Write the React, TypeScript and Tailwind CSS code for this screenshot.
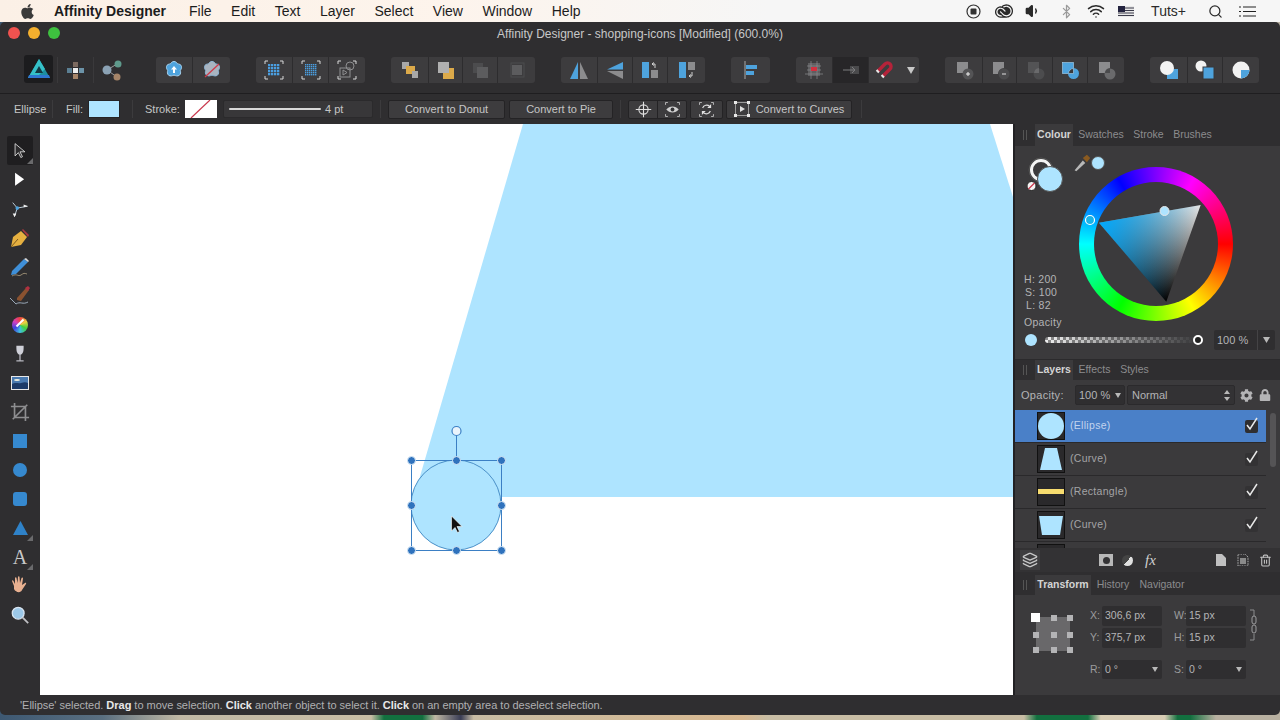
import type { ReactNode } from 'react'
import { FaApple, FaCog, FaLock } from 'react-icons/fa'
import { SiAdobecreativecloud } from 'react-icons/si'
import { Bluetooth, Layers, Search, Trash2, Volume1, Wifi } from 'lucide-react'

const BLUE = '#4ea3dd'
const GREY = '#8c8c8e'
const DIM = '#5c5c5e'
const GOLD = '#dcaa4a'

const Ico = ({ children, size = 22 }: { children: ReactNode; size?: number }) => (
  <svg width={size} height={size} viewBox="0 0 22 22" className="block">
    {children}
  </svg>
)

const Group = ({ children }: { children: ReactNode }) => (
  <div className="flex h-[26px] overflow-hidden rounded-[3px] bg-[#3d3c3e]">{children}</div>
)

const Btn = ({ w, children, dark }: { w: string; children: ReactNode; dark?: boolean }) => (
  <div className={`flex items-center justify-center border-r border-[#2d2c2e] last:border-r-0 ${w} ${dark ? 'bg-[#272628]' : ''}`}>
    {children}
  </div>
)

const Corners = () => (
  <path d="M2 5V2h3M17 2h3v3M2 17v3h3M17 20h3v-3" fill="none" stroke="#d8d8d8" strokeWidth="1" />
)

const Flower = ({ fill, edge }: { fill: string; edge: string }) => (
  <g fill={fill} stroke={edge} strokeWidth="1">
    <path d="M11 2.5c2 0 3 1.5 3.6 2.4 1.2.1 3.6.5 3.9 2.6.3 1.7-.6 3.1-1.2 3.9.4 1.3.7 3.6-1 4.9-1.6 1.1-3.6.5-5.300-.2-1.700.7-3.700 1.300-5.300.2-1.700-1.300-1.400-3.600-1-4.900-.6-.8-1.500-2.200-1.200-3.900.3-2.100 2.700-2.500 3.900-2.600C8 4 9 2.500 11 2.500z" />
  </g>
)

const DotGrid = ({ n, d, color }: { n: number; d: number; color: string }) => {
  const step = 12 / n
  const cells = Array.from({ length: n * n }, (_, i) => i)
  return (
    <g fill={color}>
      {cells.map((i) => (
        <rect key={i} x={5 + (i % n) * step} y={5 + Math.floor(i / n) * step} width={d} height={d} />
      ))}
    </g>
  )
}

const Toolbar = () => (
  <div className="flex h-[48px] shrink-0 items-start pt-3">
    <div className="ml-6 flex h-[28px] w-[29px] items-center justify-center rounded-[3px] bg-[#1c1c1e] -mt-[2px]">
      <svg width="24" height="22" viewBox="0 0 24 22">
        <path d="M12 1 23 20H1z" fill="#1d8fa0" />
        <path d="M12 1 18 11 9 20H1z" fill="#35c1c8" />
        <path d="M12 8 16 15H8z" fill="#143842" />
        <path d="M2 17h20l1 3H1z" fill="#2f78d0" />
      </svg>
    </div>
    <div className="ml-1 h-[26px] w-px bg-[#3a393b]" />
    <div className="flex h-[26px] w-[35px] items-center justify-center">
      <Ico>
        <rect x="8" y="3" width="5" height="5" fill="#7c6a60" />
        <rect x="2" y="9" width="5" height="5" fill="#5b7f93" />
        <rect x="8" y="9" width="5" height="5" fill="#eeeeee" />
        <rect x="14" y="9" width="5" height="5" fill="#6c93a8" />
        <rect x="8" y="15" width="5" height="5" fill="#a58468" />
      </Ico>
    </div>
    <div className="h-[26px] w-px bg-[#3a393b]" />
    <div className="flex h-[26px] w-[36px] items-center justify-center">
      <Ico>
        <path d="M6 11 16 5M6 11l10 7" stroke="#9a9a9a" strokeWidth="1" />
        <circle cx="6" cy="11" r="4.500" fill="#8ba2b4" />
        <circle cx="17" cy="5" r="3.500" fill="#5f9a8c" />
        <circle cx="16" cy="18" r="3.500" fill="#a58468" />
      </Ico>
    </div>
    <div className="ml-[26px] flex gap-[26px]">
      <Group>
        <Btn w="w-[37px]">
          <Ico>
            <Flower fill={BLUE} edge="#a8d4f2" />
            <path d="M11 7l3 3.500h-2V14h-2v-3.500H8z" fill="#ffffff" />
          </Ico>
        </Btn>
        <Btn w="w-[37px]">
          <Ico>
            <Flower fill="#a9b4c0" edge="#8fb8d8" />
            <path d="M4 18 18 5" stroke="#cf3a4a" strokeWidth="1.300" />
          </Ico>
        </Btn>
      </Group>
      <Group>
        <Btn w="w-[37px]">
          <Ico>
            <Corners />
            <DotGrid n={4} d={2.300} color="#4a9ee0" />
          </Ico>
        </Btn>
        <Btn w="w-[36px]">
          <Ico>
            <Corners />
            <DotGrid n={6} d={1.400} color="#4a9ee0" />
          </Ico>
        </Btn>
        <Btn w="w-[36px]">
          <Ico>
            <Corners />
            <g fill="none" stroke="#8f8f91" strokeWidth="1">
              <rect x="4" y="9" width="10" height="9" />
              <circle cx="14" cy="7" r="4" />
              <path d="M7 11v5l4-2.500z" />
            </g>
          </Ico>
        </Btn>
      </Group>
      <Group>
        <Btn w="w-[38px]">
          <Ico>
            <rect x="3" y="3" width="7" height="7" fill="#a8a8a8" />
            <rect x="7" y="7" width="9" height="8" fill={GOLD} />
            <rect x="13" y="12" width="6" height="7" fill="#a8a8a8" />
          </Ico>
        </Btn>
        <Btn w="w-[34px]">
          <Ico>
            <rect x="8" y="9" width="11" height="11" fill={GOLD} />
            <rect x="3" y="3" width="11" height="11" fill="#b0b0b0" />
          </Ico>
        </Btn>
        <Btn w="w-[35px]">
          <Ico>
            <rect x="4" y="4" width="10" height="10" fill="#4c4c4e" />
            <rect x="8" y="8" width="11" height="11" fill={DIM} />
          </Ico>
        </Btn>
        <Btn w="w-[37px]">
          <Ico>
            <rect x="5" y="4" width="13" height="14" fill="none" stroke="#4c4c4e" />
            <rect x="6" y="6" width="10" height="10" fill={DIM} />
          </Ico>
        </Btn>
      </Group>
      <Group>
        <Btn w="w-[37px]">
          <Ico>
            <path d="M10 3v17H2z" fill={BLUE} />
            <path d="M12 3v17h8z" fill={GREY} />
          </Ico>
        </Btn>
        <Btn w="w-[35px]">
          <Ico>
            <path d="M19 3v7.500H3z" fill={BLUE} />
            <path d="M19 20v-8H3z" fill={GREY} />
          </Ico>
        </Btn>
        <Btn w="w-[35px]">
          <Ico>
            <rect x="3" y="3" width="7" height="16" fill={BLUE} />
            <rect x="12" y="11" width="7" height="8" fill={GREY} />
            <path d="M13 5h3v4M13 5l2-1.500M13 5l2 1.500" fill="none" stroke="#e0e0e0" strokeWidth="0.900" />
          </Ico>
        </Btn>
        <Btn w="w-[37px]">
          <Ico>
            <rect x="3" y="3" width="7" height="16" fill={BLUE} />
            <rect x="12" y="3" width="7" height="8" fill={GREY} />
            <path d="M16 13v4h-3M13 17l2-1.500M13 17l2 1.500" fill="none" stroke="#e0e0e0" strokeWidth="0.900" />
          </Ico>
        </Btn>
      </Group>
      <Group>
        <Btn w="w-[39px]">
          <Ico>
            <path d="M5 2v18" stroke="#a8a8a8" strokeWidth="1" />
            <rect x="6" y="6" width="11" height="4" fill={BLUE} />
            <rect x="6" y="12" width="8" height="4" fill={BLUE} />
          </Ico>
        </Btn>
      </Group>
      <Group>
        <Btn w="w-[37px]">
          <Ico>
            <rect x="5" y="4" width="12" height="13" fill="#5f5f61" />
            <path d="M2 15h18M8 2v18M14 2v18M4 7h14M4 11h14" stroke="#8e8e90" strokeWidth="0.700" />
            <rect x="8" y="8" width="6" height="4" fill="#d2303f" />
          </Ico>
        </Btn>
        <Btn w="w-[36px]" dark>
          <Ico>
            <rect x="10" y="7" width="9" height="8" fill="#4a4a4c" />
            <path d="M3 11h12M12 8l3 3-3 3" fill="none" stroke="#7c7c7e" strokeWidth="1" />
          </Ico>
        </Btn>
        <div className="flex w-[50px] items-center pl-[5px]">
          <Ico>
            <path d="M4 12 11 5a3.500 3.500 0 0 1 5 5L9 17" fill="none" stroke="#b5233a" strokeWidth="3.400" />
            <path d="M3 13 4.500 11.500M8 18 9.500 16.500" fill="none" stroke="#e8e8e8" strokeWidth="3.400" />
          </Ico>
          <svg width="8" height="7" viewBox="0 0 8 7" className="ml-[11px]">
            <path d="M0 0h8L4 7z" fill="#c8c8c8" />
          </svg>
        </div>
      </Group>
      <Group>
        <Btn w="w-[38px]">
          <Ico>
            <rect x="4" y="3" width="11" height="11" fill={GREY} />
            <circle cx="15" cy="15" r="5.500" fill="#545456" />
            <path d="M13 15h4M15 13v4" stroke="#f0f0f0" strokeWidth="1" />
          </Ico>
        </Btn>
        <Btn w="w-[34px]">
          <Ico>
            <path d="M4 3h11v6a6 6 0 0 0-6 6H4z" fill={GREY} />
            <circle cx="15" cy="15" r="5.500" fill="#4b4b4d" />
            <path d="M13 15h4" stroke="#e0e0e0" strokeWidth="1" />
          </Ico>
        </Btn>
        <Btn w="w-[36px]">
          <Ico>
            <rect x="4" y="3" width="11" height="11" fill="#535355" />
            <circle cx="15" cy="15" r="5.500" fill="#4c4c4e" />
            <path d="M10 14a5.500 5.500 0 0 1 5-5v5z" fill="#6a6a6c" />
          </Ico>
        </Btn>
        <Btn w="w-[35px]">
          <Ico>
            <rect x="3.500" y="3.500" width="11" height="11" fill={BLUE} stroke="#a8d4f2" strokeWidth="0.600" />
            <circle cx="14.500" cy="14.500" r="5.500" fill={BLUE} />
            <path d="M9.500 14.500h5v-5a5 5 0 0 0-5 5z" fill="#39393b" stroke="#a8d4f2" strokeWidth="0.600" />
          </Ico>
        </Btn>
        <Btn w="w-[36px]">
          <Ico>
            <rect x="4" y="3" width="11" height="11" fill={GREY} />
            <circle cx="15" cy="15" r="5.500" fill="#6a6a6c" />
            <path d="M10 14a5.500 5.500 0 0 1 5-5v5z" fill="#4a4a4c" />
          </Ico>
        </Btn>
      </Group>
      <Group>
        <Btn w="w-[38px]">
          <Ico>
            <rect x="9" y="10" width="11" height="10" fill={BLUE} />
            <circle cx="9" cy="9" r="7" fill="#f2f2f2" />
          </Ico>
        </Btn>
        <Btn w="w-[35px]">
          <Ico>
            <circle cx="7" cy="7" r="5.500" fill="#f2f2f2" />
            <rect x="9" y="8" width="11" height="12" fill={BLUE} stroke="#39393b" strokeWidth="1" />
          </Ico>
        </Btn>
        <Btn w="w-[36px]">
          <Ico>
            <circle cx="11" cy="11" r="8.500" fill="#f2f2f2" />
            <path d="M11 11h8.500a8.500 8.500 0 0 1-8.500 8.500z" fill={BLUE} />
          </Ico>
        </Btn>
      </Group>
    </div>
  </div>
)

const CtxBtn = ({ w, children }: { w: string; children: ReactNode }) => (
  <div className={`flex h-[19px] items-center justify-center rounded-[2px] border border-[#242325] bg-[#3d3c3e] ${w}`}>
    {children}
  </div>
)

const ContextBar = () => (
  <div className="flex h-[31px] shrink-0 items-center border-t border-[#1f1e20] text-[11px] text-[#c6c6c6]">
    <div className="flex h-[18px] w-[53px] items-center border-r border-[#3c3b3d] pl-[14px]">Ellipse</div>
    <span className="ml-[13px] w-[22px]">Fill:</span>
    <div className="h-[18px] w-8 border border-[#242325] bg-[#aee4ff]" />
    <div className="ml-3 h-[18px] w-px bg-[#3c3b3d]" />
    <span className="ml-3 w-[40px]">Stroke:</span>
    <svg width="32" height="18" viewBox="0 0 32 18" className="block">
      <rect width="32" height="18" fill="#ffffff" />
      <path d="M6 18 25 0" stroke="#c9374c" strokeWidth="1.200" />
    </svg>
    <div className="ml-[6px] flex h-[18px] w-[150px] items-center rounded-[2px] border border-[#2b2a2c] bg-[#383739] pl-[5px]">
      <div className="h-[2px] w-[92px] rounded-full bg-[#d8d8d8]" />
      <span className="ml-1">4 pt</span>
    </div>
    <div className="ml-[7px] h-[18px] w-px bg-[#3c3b3d]" />
    <div className="ml-[7px] flex items-center gap-1">
      <CtxBtn w="w-[117px]">Convert to Donut</CtxBtn>
      <CtxBtn w="w-[104px]">Convert to Pie</CtxBtn>
    </div>
    <div className="ml-[7px] h-[18px] w-px bg-[#3c3b3d]" />
    <div className="ml-[7px] flex h-[19px] w-[59px] rounded-[2px] border border-[#242325] bg-[#3d3c3e]">
      <div className="flex w-[29px] items-center justify-center border-r border-[#242325]">
        <Ico size={17}>
          <circle cx="11" cy="11" r="6" fill="none" stroke="#e0e0e0" strokeWidth="1.400" />
          <path d="M11 1v20M1 11h20" stroke="#e0e0e0" strokeWidth="1.400" />
        </Ico>
      </div>
      <div className="flex flex-1 items-center justify-center">
        <Ico size={17}>
          <Corners />
          <path d="M3 11c4-5 12-5 16 0-4 5-12 5-16 0z" fill="#d0d0d0" />
          <circle cx="11" cy="11" r="2.500" fill="#333335" />
        </Ico>
      </div>
    </div>
    <CtxBtn w="ml-[3px] w-[33px]">
      <Ico size={17}>
        <Corners />
        <path d="M6 9a5.500 5.500 0 0 1 9-2l1 1M16 13a5.500 5.500 0 0 1-9 2l-1-1" fill="none" stroke="#e0e0e0" strokeWidth="1.500" />
        <path d="M17 4v5h-5zM5 18v-5h5z" fill="#e0e0e0" />
      </Ico>
    </CtxBtn>
    <CtxBtn w="ml-[3px] w-[126px] gap-[6px]">
      <svg width="16" height="16" viewBox="0 0 16 16">
        <rect x="1.500" y="1.500" width="13" height="13" fill="none" stroke="#9a9a9a" />
        <path d="M6 5l5 3-5 3z" fill="#e0e0e0" />
        <path d="M0 0h3v3H0zM13 0h3v3h-3zM0 13h3v3H0zM13 13h3v3h-3z" fill="#e8e8e8" />
      </svg>
      <span>Convert to Curves</span>
    </CtxBtn>
    <div className="ml-[9px] h-[18px] w-px bg-[#3c3b3d]" />
  </div>
)

const Tool = ({ children, active, corner }: { children: ReactNode; active?: boolean; corner?: boolean }) => (
  <div className={`relative mx-auto flex h-[29px] w-[26px] items-center justify-center rounded-[2px] ${active ? 'bg-[#1f1e20]' : ''}`}>
    {children}
    {corner && <div className="absolute bottom-[1px] right-0 h-0 w-0 border-b-[6px] border-l-[6px] border-b-[#6a6a6c] border-l-transparent" />}
  </div>
)

const ToolColumn = () => (
  <div className="flex w-[40px] flex-col pt-3">
    <Tool active corner>
      <Ico size={18}>
        <path d="M5 2v15l4-4 3 6 2-1-3-6h6z" fill="#2c2b2d" stroke="#e8e8e8" strokeWidth="1" />
      </Ico>
    </Tool>
    <Tool>
      <Ico size={18}>
        <path d="M5 2v16l11-8z" fill="#ffffff" />
      </Ico>
    </Tool>
    <Tool>
      <Ico size={20}>
        <path d="M8 10 3 4M8 10l11-2M8 10 5 19" stroke="#c8d8e4" strokeWidth="1" fill="none" />
        <circle cx="8" cy="10" r="2" fill={BLUE} />
        <path d="M15 6l5 2-5 1zM3 16h4l-2 4z" fill="#f0f0f0" />
      </Ico>
    </Tool>
    <Tool>
      <Ico size={22}>
        <path d="M2 20 4 10l8-6 6 6-6 8z" fill="#e6b040" />
        <path d="M2 20 9 12" stroke="#7a5a20" strokeWidth="1" />
        <path d="M13 3l1-1 6 6-1 2z" fill="#a8383f" />
      </Ico>
    </Tool>
    <Tool>
      <Ico size={22}>
        <path d="M3 15 15 3l4 3L7 18l-5 1z" fill="#3f8fd8" />
        <path d="M15 3l2-1 3 3-1 1z" fill="#d8d8d8" />
        <path d="M3 20c5-3 6 1 9-1s3-2 6-1" fill="none" stroke="#b0a080" strokeWidth="0.800" />
      </Ico>
    </Tool>
    <Tool>
      <Ico size={22}>
        <path d="M8 13 17 3l3 2-8 11-4-1z" fill="#8a5230" />
        <path d="M16 3l3-2 2 2-2 3z" fill="#b03040" />
        <path d="M1 13l6 6c4-3 7 1 12-2" fill="none" stroke="#a8b8c8" strokeWidth="0.900" />
      </Ico>
    </Tool>
    <Tool>
      <div className="relative h-[16px] w-[16px] rounded-full bg-[conic-gradient(#f04040,#f0d040,#40d040,#40c0e0,#4040e0,#d040c0,#f04040)]">
        <div className="absolute left-[7px] top-[1px] h-[10px] w-[2px] rotate-45 bg-white" />
      </div>
    </Tool>
    <Tool>
      <Ico size={20}>
        <path d="M7 2h8c0 5 0 9-4 10-4-1-4-5-4-10z" fill="#cfd0d8" />
        <path d="M11 12v6M7 18.500h8" stroke="#b8b8c0" strokeWidth="1.400" />
      </Ico>
    </Tool>
    <Tool>
      <svg width="18" height="14" viewBox="0 0 18 14" className="block">
        <rect width="18" height="14" fill="#e8e8e8" />
        <rect x="1" y="1" width="16" height="12" fill="#4a7ab0" />
        <path d="M1 8c4-2 6 0 9-1s5-1 7 0v6H1z" fill="#1c3a68" />
        <ellipse cx="6" cy="4" rx="3" ry="1" fill="#f0f0e0" />
      </svg>
    </Tool>
    <Tool>
      <Ico size={20}>
        <path d="M5 1v16h16M1 5h16v16M3 19 19 3" fill="none" stroke="#8e8e90" strokeWidth="1.800" />
      </Ico>
    </Tool>
    <Tool>
      <div className="h-[14px] w-[14px] bg-[#3689cf]" />
    </Tool>
    <Tool>
      <div className="h-[14px] w-[14px] rounded-full bg-[#3689cf]" />
    </Tool>
    <Tool>
      <div className="h-[14px] w-[14px] rounded-[3px] bg-[#3689cf]" />
    </Tool>
    <Tool corner>
      <svg width="15" height="14" viewBox="0 0 15 14" className="block">
        <path d="M7.500 0 15 14H0z" fill="#2f82c8" />
      </svg>
    </Tool>
    <Tool corner>
      <span className="text-[20px] leading-none text-[#c8c8c8] [font-family:'Liberation_Serif',serif]">A</span>
    </Tool>
    <Tool>
      <Ico size={22}>
        <path d="M5 11 3 6c0-1 1-1 1.500 0L6 9 6 3c0-1 1.500-1 1.500 0L8.500 8 9 2c0-1 1.500-1 1.500 0l.5 6 1.500-5c.5-1 1.500-.5 1.500.5L13 10l3-2c1-.5 1.500.5 1 1l-4 6c-1 3-6 3-8-1z" fill="#e8b090" />
      </Ico>
    </Tool>
    <Tool>
      <Ico size={20}>
        <circle cx="9" cy="9" r="6.500" fill="#9cc8e8" stroke="#d8e4f0" strokeWidth="1.400" />
        <path d="M14 14l6 6" stroke="#c0c0c4" strokeWidth="2" />
      </Ico>
    </Tool>
  </div>
)

const Canvas = () => (
  <div className="relative h-[571px] w-[973px] overflow-hidden bg-white">
    <svg width="973" height="571" viewBox="0 0 973 571" className="absolute left-0 top-0">
      <path d="M483 0H950L973 73V373H374z" fill="#aee4ff" />
      <circle cx="416" cy="381" r="45" fill="#aee4ff" stroke="#4a90c8" strokeWidth="1" />
      <rect x="371.500" y="336.500" width="90" height="90" fill="none" stroke="#3b7fc4" strokeWidth="1" />
      <path d="M416.500 336V312" stroke="#3b7fc4" strokeWidth="1" />
      <circle cx="416.500" cy="307" r="4.500" fill="#eaf4fc" stroke="#3b7fc4" strokeWidth="1.200" />
      {[
        [371.5, 336.5],
        [416.5, 336.5],
        [461.5, 336.5],
        [371.5, 381.5],
        [461.5, 381.5],
        [371.5, 426.5],
        [416.5, 426.5],
        [461.5, 426.5],
      ].map(([x, y]) => (
        <circle key={`${x}-${y}`} cx={x} cy={y} r="4" fill="#2f72bd" stroke="#dcebf7" strokeWidth="1" />
      ))}
      <path d="M411.500 392v15l3.500-3.500 2.500 5 2-1-2.500-5h5z" fill="#111111" stroke="#ffffff" strokeWidth="0.600" />
    </svg>
  </div>
)

const Tabs = ({ tabs, widths, h }: { tabs: string[]; widths: string[]; h: string }) => (
  <div className={`flex bg-[#2f2e30] text-[10.500px] ${h}`}>
    <div className="flex w-[20px] items-center justify-center gap-[2px]">
      <div className="h-[10px] w-px bg-[#555]" />
      <div className="h-[10px] w-px bg-[#555]" />
    </div>
    {tabs.map((t, i) => (
      <div
        key={t}
        className={`flex items-center justify-center ${widths[i]} ${i === 0 ? 'bg-[#3b3a3c] font-bold text-[#d4d4d4]' : 'text-[#8c8c8e]'}`}
      >
        {t}
      </div>
    ))}
  </div>
)

const ColourPanel = () => (
  <div className="h-[214px] border-b border-[#2b2a2c] bg-[#3b3a3c] text-[#b4b4b6]">
    <div className="flex h-[170px]">
      <div className="flex w-[64px] flex-col justify-between pb-[4px] pl-[9px] pt-[8px] text-[10.500px] leading-[13px] tracking-[0.3px]">
        <svg width="38" height="40" viewBox="0 0 38 40" className="ml-[3px] mt-[2px] block">
          <circle cx="14" cy="14" r="12" fill="none" stroke="#555" strokeWidth="1" />
          <circle cx="14" cy="14" r="9.500" fill="none" stroke="#f4f4f4" strokeWidth="3" />
          <circle cx="4.500" cy="30" r="4.500" fill="#f4f4f4" stroke="#222" strokeWidth="1" />
          <path d="M1.500 33l6-6" stroke="#c9374c" strokeWidth="1.300" />
          <circle cx="23" cy="23" r="12.500" fill="#aee4ff" stroke="#555" strokeWidth="1" />
        </svg>
        <div>
          <div>H: 200</div>
          <div className="pl-[1px]">S: 100</div>
          <div className="pl-[2px]">L: 82</div>
        </div>
      </div>
      <div className="pt-[9px]">
        <div className="-ml-[6px] flex h-[15px] items-center">
          <Ico size={18}>
            <path d="M2 20 12 8l3 3L4 21z" fill="#b8b8b8" />
            <path d="M12 5l5-4 4 4-4 5z" fill="#8a5a20" />
          </Ico>
          <div className="h-[14px] w-[14px] rounded-full border border-[#555] bg-[#aee4ff]" />
        </div>
        <div className="relative -mt-[3px] h-[154px] w-[154px] rounded-full bg-[conic-gradient(from_90deg,#ff0000,#ffff00,#00ff00,#00ffff,#0000ff,#ff00ff,#ff0000)]">
          <div className="absolute left-[15px] top-[15px] h-[124px] w-[124px] rounded-full bg-[#3b3a3c]" />
          <svg width="154" height="154" viewBox="0 0 154 154" className="absolute left-0 top-0">
            <defs>
              <linearGradient id="edge" x1="121.700" y1="38" x2="87.300" y2="134.700" gradientUnits="userSpaceOnUse">
                <stop offset="0" stopColor="#e8e8e8" />
                <stop offset="1" stopColor="#000000" />
              </linearGradient>
              <linearGradient id="hue" x1="20" y1="55.700" x2="104.500" y2="86.400" gradientUnits="userSpaceOnUse">
                <stop offset="0" stopColor="#00aaff" />
                <stop offset="1" stopColor="#00aaff" stopOpacity="0" />
              </linearGradient>
            </defs>
            <path d="M20 55.700 121.700 38 87.300 134.700z" fill="url(#edge)" />
            <path d="M20 55.700 121.700 38 87.300 134.700z" fill="url(#hue)" />
            <circle cx="85.500" cy="44" r="4.500" fill="#aee4ff" stroke="#e8e8e8" strokeWidth="1" />
            <circle cx="11" cy="53" r="4.500" fill="#18b4e8" stroke="#ffffff" strokeWidth="1.200" />
          </svg>
        </div>
      </div>
    </div>
    <div className="pl-[9px] text-[10.500px] leading-[13px] tracking-[0.3px]">Opacity</div>
    <div className="flex h-[22px] items-center">
      <div className="ml-[10px] h-[12px] w-[12px] rounded-full bg-[#aee4ff]" />
      <div className="relative ml-[8px] h-[6px] w-[154px] rounded-full bg-[linear-gradient(90deg,transparent,#3a3a3c),repeating-conic-gradient(#f0f0f0_0_25%,#8a8a8a_0_50%)] bg-[size:100%_100%,6px_6px]">
        <div className="absolute -right-[4px] -top-[2px] h-[10px] w-[10px] rounded-full border-2 border-white bg-[#222]" />
      </div>
      <div className="ml-[15px] flex h-[20px] w-[61px] items-center rounded-[2px] bg-[#2f2e30] pl-[3px]">
        <span className="w-[40px]">100 %</span>
        <div className="flex h-[20px] flex-1 items-center justify-center border-l border-[#444345]">
          <svg width="7" height="6" viewBox="0 0 7 6">
            <path d="M0 0h7L3.500 6z" fill="#b8b8b8" />
          </svg>
        </div>
      </div>
    </div>
  </div>
)

const LayerRow = ({ name, selected, children }: { name: string; selected?: boolean; children: ReactNode }) => (
  <div className={`flex h-[33px] items-center border-b border-[#2a292b] pl-[22px] ${selected ? 'bg-[#4a80c8] text-[#c2d4ee]' : 'text-[#a4a4a6]'}`}>
    <svg width="28" height="28" viewBox="0 0 28 28" className="block">
      <rect x="0.500" y="0.500" width="27" height="27" fill="#2a292b" stroke="#111" />
      {children}
    </svg>
    <span className="ml-[5px] w-[175px] text-[10.500px] tracking-[0.3px]">{name}</span>
    <div className={`relative h-[13px] w-[13px] rounded-[2px] ${selected ? 'bg-[#2f2e30]' : 'bg-[#333234]'}`}>
      <svg width="14" height="14" viewBox="0 0 14 14" className="absolute -top-[3px] left-0">
        <path d="M2 8l3 4 7-11" fill="none" stroke="#e8e8e8" strokeWidth="1.500" />
      </svg>
    </div>
  </div>
)

const LayersPanel = () => (
  <div className="bg-[#3b3a3c] text-[11px] text-[#b4b4b6]">
    <div className="flex h-[30px] items-center pl-[6px]">
      <span className="w-[54px] tracking-[0.3px]">Opacity:</span>
      <div className="flex h-[20px] w-[50px] items-center rounded-[2px] border border-[#2b2a2c] bg-[#2f2e30] pl-[3px]">
        <span className="w-[36px]">100 %</span>
        <svg width="6" height="5" viewBox="0 0 6 5">
          <path d="M0 0h6L3 5z" fill="#b8b8b8" />
        </svg>
      </div>
      <div className="ml-[2px] flex h-[20px] w-[108px] items-center justify-between rounded-[2px] border border-[#2b2a2c] bg-[#333234] px-[4px]">
        <span>Normal</span>
        <svg width="6" height="11" viewBox="0 0 6 11">
          <path d="M3 0l3 4H0zM3 11 0 7h6z" fill="#b8b8b8" />
        </svg>
      </div>
      <FaCog size={13} className="ml-[5px] text-[#b4b4b6]" />
      <FaLock size={12} className="ml-[6px] text-[#b4b4b6]" />
    </div>
    <div className="flex h-[138px]">
      <div className="w-[251px] overflow-hidden">
        <LayerRow name="(Ellipse)" selected>
          <circle cx="14" cy="14" r="13" fill="#aee4ff" />
        </LayerRow>
        <LayerRow name="(Curve)">
          <path d="M8 3h12l5 22H3z" fill="#aee4ff" />
        </LayerRow>
        <LayerRow name="(Rectangle)">
          <rect x="1" y="11" width="26" height="5" fill="#f7dc6f" />
        </LayerRow>
        <LayerRow name="(Curve)">
          <path d="M2 5h24l-3 19H5z" fill="#aee4ff" />
        </LayerRow>
        <LayerRow name="">
          <circle cx="14" cy="14" r="9" fill="#f7dc6f" />
        </LayerRow>
      </div>
      <div className="ml-[4px] mt-[3px] h-[54px] w-[6px] rounded-full bg-[#555456]" />
    </div>
    <div className="flex h-[24px] items-center bg-[#333234]">
      <div className="ml-[5px] flex h-[20px] w-[20px] items-center justify-center bg-[#3f3e40]">
        <Layers size={16} className="text-[#c8c8c8]" />
      </div>
      <div className="ml-[59px] flex h-[12px] w-[14px] items-center justify-center bg-[#b8b8b8]">
        <div className="h-[7px] w-[7px] rounded-full bg-[#333234]" />
      </div>
      <div className="ml-[9px] h-[11px] w-[11px] rounded-full bg-[linear-gradient(135deg,#444_50%,#e0e0e0_50%)]" />
      <span className="ml-[12px] text-[15px] italic text-[#d0d0d0] [font-family:'Liberation_Serif',serif]">fx</span>
      <svg width="10" height="12" viewBox="0 0 10 12" className="ml-[60px]">
        <path d="M0 0h6l4 4v8H0z" fill="#c0c0c0" />
      </svg>
      <svg width="12" height="12" viewBox="0 0 12 12" className="ml-[11px]">
        <path d="M1 0h7l3 3v9H1z" fill="none" stroke="#b0b0b0" strokeDasharray="1.500 1" />
        <rect x="3" y="4" width="6" height="6" fill="#8a8a8a" />
      </svg>
      <Trash2 size={13} className="ml-[10px] text-[#c0c0c0]" />
    </div>
  </div>
)

const Field = ({ label, value, arrow, w = 'w-[60px]' }: { label: string; value: string; arrow?: boolean; w?: string }) => (
  <div className="flex items-center">
    <span className="w-[12px] text-[#9c9c9e]">{label}</span>
    <div className={`flex items-center justify-between rounded-[2px] bg-[#2f2e30] pl-[3px] pr-[4px] ${w} ${arrow ? 'h-[19px]' : 'h-[20px]'}`}>
      <span>{value}</span>
      {arrow && (
        <svg width="6" height="5" viewBox="0 0 6 5">
          <path d="M0 0h6L3 5z" fill="#b8b8b8" />
        </svg>
      )}
    </div>
  </div>
)

const TransformPanel = () => (
  <div className="flex h-[100px] bg-[#3b3a3c] text-[10.500px] text-[#b4b4b6]">
    <div className="relative ml-[16px] mt-[18px] h-[40px] w-[42px]">
      <div className="absolute left-[5px] top-[4px] h-[34px] w-[34px] bg-[#69686a]" />
      <div className="relative grid h-[40px] w-[42px] grid-cols-[9px_6px_6px] content-between items-center justify-between justify-items-center">
        {[0, 1, 2, 3, 4, 5, 6, 7, 8].map((i) => (
          <div key={i} className={i === 0 ? 'h-[9px] w-[9px] bg-white' : 'h-[6px] w-[6px] bg-[#b4b4b6]'} />
        ))}
      </div>
    </div>
    <div className="ml-[17px] mt-[11px] flex flex-col">
      <div className="grid w-[156px] grid-cols-2 gap-x-[12px] gap-y-[2px]">
        <Field label="X:" value="306,6 px" />
        <Field label="W:" value="15 px" />
        <Field label="Y:" value="375,7 px" />
        <Field label="H:" value="15 px" />
      </div>
      <div className="mt-[12px] grid w-[156px] grid-cols-2 gap-x-[12px]">
        <Field label="R:" value="0 °" arrow />
        <Field label="S:" value="0 °" arrow />
      </div>
    </div>
    <svg width="8" height="32" viewBox="0 0 8 32" className="ml-[4px] mt-[14px]">
      <path d="M0 1h4v6M0 31h4v-6" fill="none" stroke="#8c8c8e" />
      <rect x="2" y="7" width="4" height="8" rx="2" fill="none" stroke="#9c9c9e" />
      <rect x="2" y="16" width="4" height="8" rx="2" fill="none" stroke="#9c9c9e" />
    </svg>
  </div>
)

export default function App() {
  return (
    <div className="flex h-[720px] w-[1280px] flex-col overflow-hidden bg-[linear-gradient(90deg,#3d5872_0,#5a6f80_8%,#c0b8a4_14%,#c8bda4_29%,#12703f_30%,#12703f_33%,#c0b8a4_34%,#3a3d55_36%,#c8bda4_37%,#d8b890_58%,#c8bda4_60%,#c8bda4_80%,#12703f_81%,#12703f_85%,#d8cdb4_86%,#d8cdb4_91%,#12703f_92%,#12703f_93%,#b8b0a0_95%)] text-[11px] [font-family:'Liberation_Sans',Arial,sans-serif]">
      <div className="flex h-[22px] shrink-0 items-center bg-[linear-gradient(90deg,#fbf0e6,#fdf4ec_35%,#f6f6f6_60%)] text-[14px] text-[#1c1c1c]">
        <FaApple size={17} className="ml-[19px] text-[#3a3a3a]" />
        <span className="ml-[18px] font-bold">Affinity Designer</span>
        <div className="ml-[23px] flex gap-[19.500px]">
          {['File', 'Edit', 'Text', 'Layer', 'Select', 'View', 'Window', 'Help'].map((m) => (
            <span key={m}>{m}</span>
          ))}
        </div>
        <div className="ml-auto flex items-center pr-[24px] text-[#2a2a2a]">
          <svg width="15" height="15" viewBox="0 0 15 15">
            <circle cx="7.500" cy="7.500" r="6.500" fill="none" stroke="#333" strokeWidth="1.200" />
            <rect x="4.500" y="4.500" width="6" height="6" rx="1" fill="#333" />
          </svg>
          <SiAdobecreativecloud size={18} className="ml-[14px]" />
          <Volume1 size={16} className="ml-[12px]" fill="#2a2a2a" />
          <Bluetooth size={15} className="ml-[18px] text-[#9a9a9a]" />
          <Wifi size={18} className="ml-[13px]" />
          <svg width="16" height="11" viewBox="0 0 16 11" className="ml-[13px]">
            <rect width="16" height="11" fill="#e8e8e8" />
            <path d="M0 2h16M0 4.500h16M0 7h16M0 9.500h16" stroke="#3a3a4a" strokeWidth="1" />
            <rect width="7" height="6" fill="#23233f" />
          </svg>
          <span className="ml-[17px]">Tuts+</span>
          <Search size={15} className="ml-[22px]" />
          <svg width="17" height="13" viewBox="0 0 17 13" className="ml-[16px]">
            <path d="M4 2h13M4 6.500h13M4 11h13M0 2h2M0 6.500h2M0 11h2" stroke="#222" strokeWidth="1.200" />
          </svg>
        </div>
      </div>
      <div className="flex h-[693px] shrink-0 flex-col overflow-hidden rounded-[5px] bg-[#2f2e30]">
        <div className="relative flex h-[23px] shrink-0 items-center justify-center text-[12px] text-[#c8c8c8]">
          <div className="absolute left-[8px] top-[5px] flex gap-2">
            <div className="h-3 w-3 rounded-full bg-[#f0524f]" />
            <div className="h-3 w-3 rounded-full bg-[#f5b02e]" />
            <div className="h-3 w-3 rounded-full bg-[#3ec03f]" />
          </div>
          Affinity Designer - shopping-icons [Modified] (600.0%)
        </div>
        <Toolbar />
        <ContextBar />
        <div className="flex h-[571px] shrink-0">
          <ToolColumn />
          <Canvas />
          <div className="w-[267px] border-l-2 border-[#222124]">
            <Tabs h="h-[22px]" tabs={['Colour', 'Swatches', 'Stroke', 'Brushes']} widths={['w-[38px]', 'w-[56px]', 'w-[39px]', 'w-[49px]']} />
            <ColourPanel />
            <Tabs h="h-[20px]" tabs={['Layers', 'Effects', 'Styles']} widths={['w-[38px]', 'w-[43px]', 'w-[37px]']} />
            <LayersPanel />
            <div className="h-[3px] bg-[#2f2e30]" />
            <Tabs h="h-[20px]" tabs={['Transform', 'History', 'Navigator']} widths={['w-[56px]', 'w-[44px]', 'w-[54px]']} />
            <TransformPanel />
          </div>
        </div>
        <div className="flex h-[20px] shrink-0 items-center pl-5 tracking-[-0.02px] text-[#b0b0b2]">
          <span>
            'Ellipse' selected. <b className="text-[#e8e8e8]">Drag</b> to move selection. <b className="text-[#e8e8e8]">Click</b> another object to select it. <b className="text-[#e8e8e8]">Click</b> on an empty area to deselect selection.
          </span>
        </div>
      </div>
    </div>
  )
}
